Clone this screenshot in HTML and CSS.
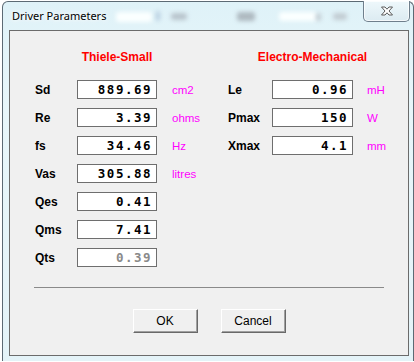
FILE: index.html
```html
<!DOCTYPE html>
<html lang="en">
<head>
  <meta charset="UTF-8" />
  <title>Driver Parameters</title>
  <link rel="stylesheet" href="styles.css">
</head>
<body>

  <div class="window">
    <div class="titlebar">
      <span class="title">Driver Parameters</span>
      <span class="blur b1"></span>
      <span class="blur b2"></span>
      <span class="blur b3"></span>
      <span class="blur b4"></span>
      <span class="blur b5"></span>
      <span class="blur b6"></span>
      <span class="blur b7"></span>
      <button class="close-btn" type="button">
        <svg width="14" height="10" viewBox="0 0 14 10">
          <path d="M1.5 1 H5 L7 3.2 L9 1 H12.5 L9 5 L12.5 9 H9 L7 6.8 L5 9 H1.5 L5 5 Z" fill="#fff" stroke="#5a5a5a" stroke-width="1" stroke-linejoin="round"/>
        </svg>
      </button>
    </div>

    <div class="client">
      <div class="columns">
        <div class="group">
          <div class="group-title"><span>Thiele-Small</span></div>
          <div class="fields">
            <label>Sd</label><div class="box">889.69</div><span class="unit">cm2</span>
            <label>Re</label><div class="box">3.39</div><span class="unit">ohms</span>
            <label>fs</label><div class="box">34.46</div><span class="unit">Hz</span>
            <label>Vas</label><div class="box">305.88</div><span class="unit">litres</span>
            <label>Qes</label><div class="box">0.41</div><span class="unit"></span>
            <label>Qms</label><div class="box">7.41</div><span class="unit"></span>
            <label>Qts</label><div class="box disabled">0.39</div><span class="unit"></span>
          </div>
        </div>

        <div class="group right">
          <div class="group-title"><span>Electro-Mechanical</span></div>
          <div class="fields">
            <label>Le</label><div class="box">0.96</div><span class="unit">mH</span>
            <label>Pmax</label><div class="box">150</div><span class="unit">W</span>
            <label>Xmax</label><div class="box">4.1</div><span class="unit">mm</span>
          </div>
        </div>
      </div>

      <div class="separator"></div>

      <div class="buttons">
        <button type="button" class="btn">OK</button>
        <button type="button" class="btn">Cancel</button>
      </div>
    </div>
  </div>

</body>
</html>
```

FILE: styles.css
```css
html, body {
  margin: 0;
  height: 100%;
}

body {
  background: #fff;
  overflow: hidden;
  font-family: "Liberation Sans", Arial, sans-serif;
}

.window {
  width: 412px;
  height: 360px;
  margin: 1px 0 0 2px;
  box-sizing: border-box;
  border: 1px solid #5c6a74;
  border-bottom: none;
  border-radius: 6px 6px 0 0;
  background: linear-gradient(#dff2f8, #e8f6fa 30%, #e4f3f8);
  padding: 0 4px 5px 6px;
  display: flex;
  flex-direction: column;
}

.titlebar {
  height: 28px;
  position: relative;
  flex: none;
}

.title {
  position: absolute;
  left: 3px;
  top: 6px;
  font-family: "Noto Sans", "Open Sans", sans-serif;
  font-size: 11px;
  color: #000;
  text-shadow: 0 0 6px #fff, 0 0 4px #fff;
}

.blur {
  position: absolute;
  filter: blur(2px);
  border-radius: 3px;
}

.b1 { left: 107px; top: 10px; width: 36px; height: 10px; background: #fbffff; }
.b2 { left: 147px; top: 9px; width: 4px; height: 10px; background: #b6cde0; }
.b3 { left: 162px; top: 11px; width: 16px; height: 7px; background: #b8c4cc; }
.b4 { left: 228px; top: 10px; width: 18px; height: 9px; background: #aeb9c0; }
.b5 { left: 270px; top: 10px; width: 38px; height: 9px; background: #fbffff; }
.b6 { left: 307px; top: 11px; width: 5px; height: 8px; background: #c2ccd2; }
.b7 { left: 324px; top: 11px; width: 14px; height: 7px; background: #c2ccd2; }

.close-btn {
  position: absolute;
  right: -1px;
  top: -1px;
  width: 47px;
  height: 21px;
  padding: 0;
  border: 1px solid #6f7f8c;
  border-top: none;
  border-radius: 0 0 5px 5px;
  background: linear-gradient(#eef8fb, #dcebf1);
  box-shadow: inset 0 0 0 1px rgba(255,255,255,0.7);
  display: flex;
  justify-content: center;
  align-items: center;
}

.client {
  flex: 1;
  background: #f0f0f0;
  border: 1px solid #6b6b6b;
  display: flex;
  flex-direction: column;
}

.columns {
  display: flex;
  padding: 19px 0 0 25px;
}

.group {
  width: 193px;
  flex: none;
}

.group-title {
  margin-left: 42px;
  width: 80px;
  display: flex;
  justify-content: center;
  white-space: nowrap;
  color: #ff0000;
  font-weight: bold;
  font-size: 12px;
  line-height: 14px;
  height: 14px;
  margin-bottom: 16px;
}

.fields {
  display: grid;
  grid-template-columns: 42px 80px auto;
  row-gap: 9px;
  align-items: center;
}

.right .group-title {
  margin-left: 44px;
  width: 81px;
}

.right .fields {
  grid-template-columns: 44px 81px auto;
}

.fields label {
  font-weight: bold;
  font-size: 12px;
  color: #000;
}

.box {
  height: 19px;
  box-sizing: border-box;
  border: 1px solid #6e6e6e;
  background: #fff;
  text-align: right;
  padding-right: 4px;
  font-family: "DejaVu Sans Mono", monospace;
  font-weight: bold;
  font-size: 12.5px;
  letter-spacing: 1.5px;
  line-height: 17px;
  color: #000;
}

.box.disabled {
  color: #8a8a8a;
}

.unit {
  margin-left: 15px;
  color: #ff00ff;
  font-size: 11.5px;
}

.right .unit {
  margin-left: 14px;
}

.separator {
  margin: 20px 24px 0 24px;
  border-top: 1px solid #8a8a8a;
}

.buttons {
  display: flex;
  justify-content: center;
  gap: 23px;
  margin-top: 21px;
}

.btn {
  width: 65px;
  height: 24px;
  padding: 0;
  background: #f0f0f0;
  border: 1px solid;
  border-color: #fff #696969 #696969 #fff;
  box-shadow: inset -1px -1px 0 #a0a0a0;
  font-family: "Liberation Sans", Arial, sans-serif;
  font-size: 12px;
  color: #000;
}
```
